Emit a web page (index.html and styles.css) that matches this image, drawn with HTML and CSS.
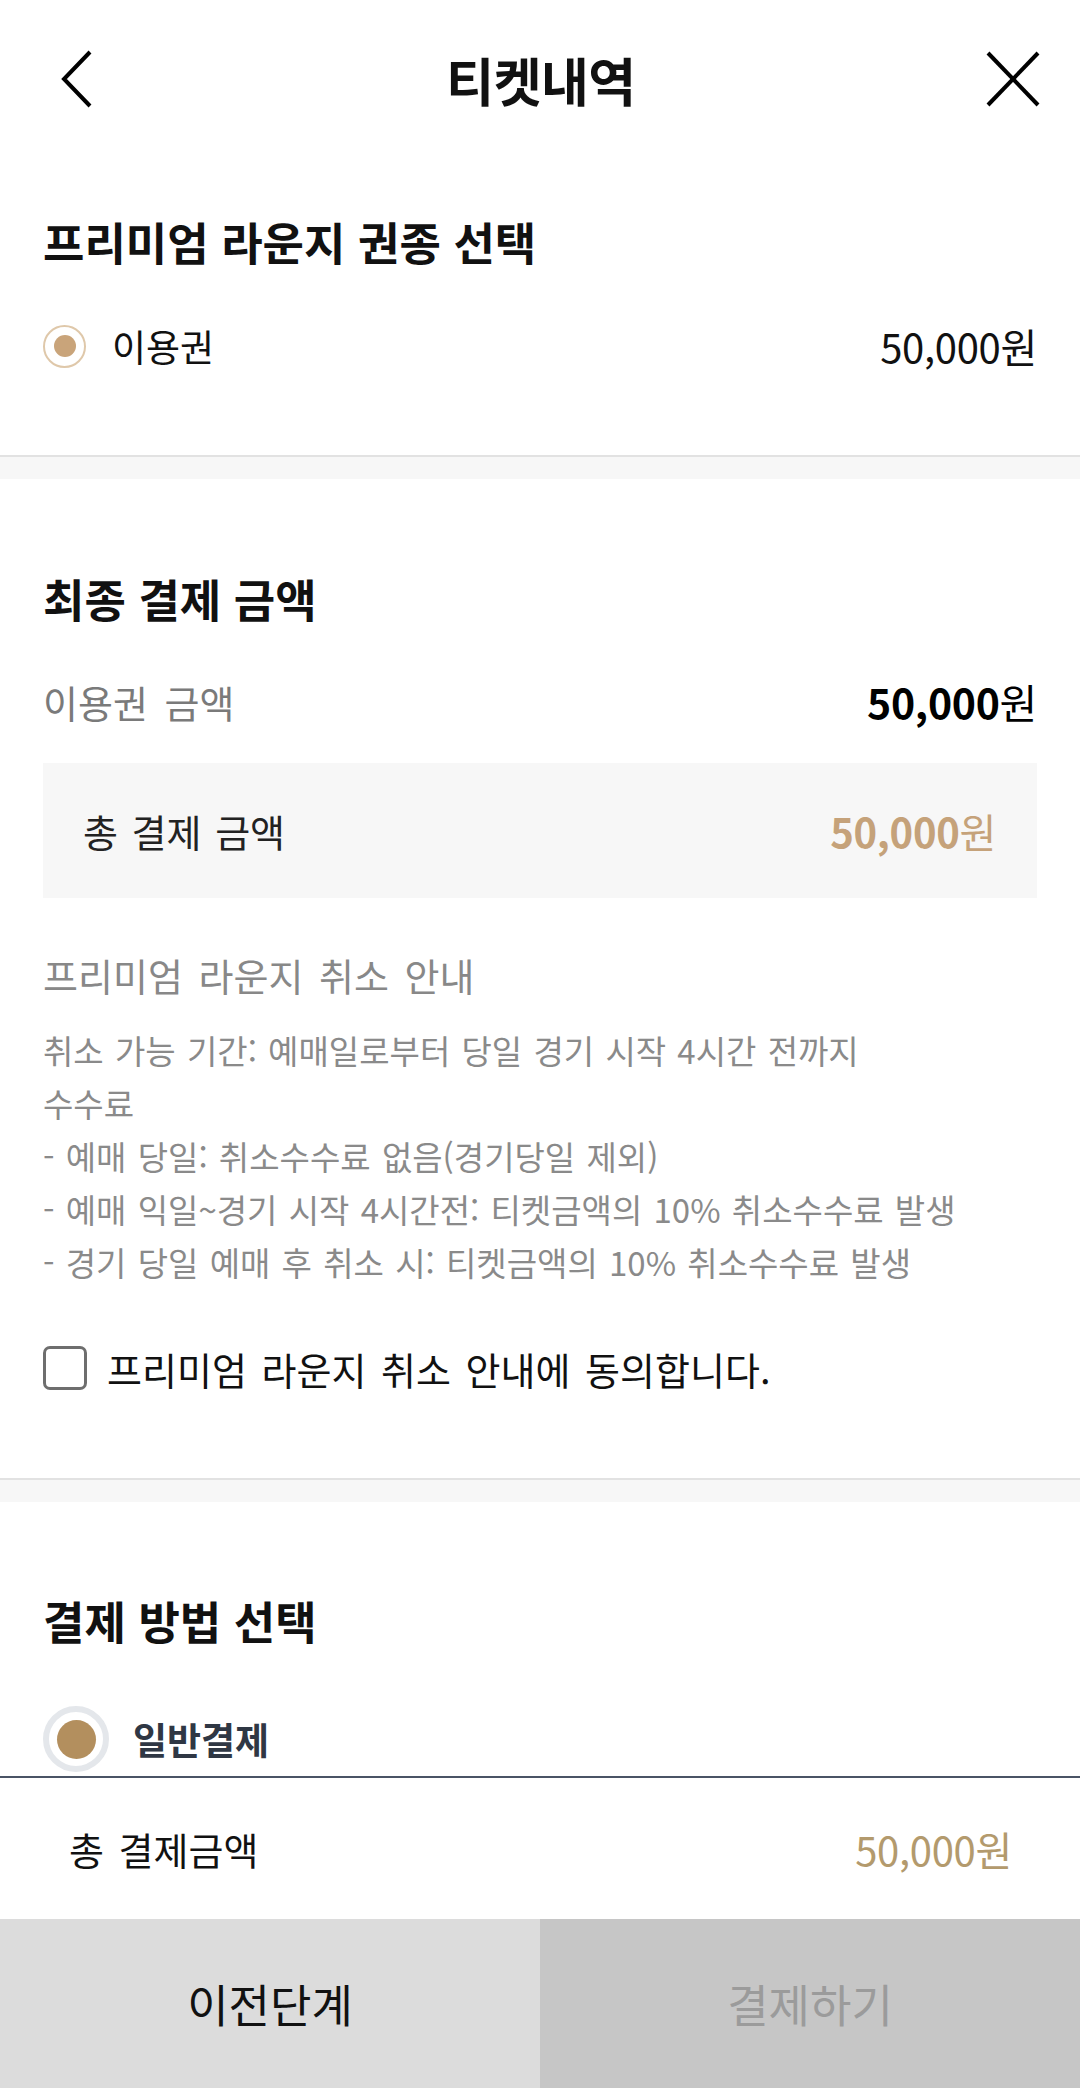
FILE: index.html
```html
<!DOCTYPE html>
<html lang="ko">
<head>
   <meta charset="UTF-8">
   <meta name="viewport" content="width=device-width, initial-scale=1.0">
   <title>티켓내역</title>
   <link rel="stylesheet" href="styles.css">
</head>
<body>
   <header class="top-bar">
      <button class="icon-btn" aria-label="뒤로">
         <svg width="44" height="60" viewBox="0 0 44 60">
            <polyline points="34,3 8,30 34,57" fill="none" stroke="#000" stroke-width="4" stroke-linejoin="miter"/>
         </svg>
      </button>
      <h1 class="page-title">티켓내역</h1>
      <button class="icon-btn" aria-label="닫기">
         <svg width="60" height="60" viewBox="0 0 60 60">
            <line x1="6" y1="4" x2="56" y2="56" stroke="#000" stroke-width="4"/>
            <line x1="56" y1="4" x2="6" y2="56" stroke="#000" stroke-width="4"/>
         </svg>
      </button>
   </header>

   <section class="block block-ticket">
      <h2 class="block-title">프리미엄 라운지 권종 선택</h2>
      <div class="row ticket-row">
         <label class="radio-label">
            <span class="radio radio-small"><span class="radio-dot"></span></span>
            <span>이용권</span>
         </label>
         <span class="price">50,000원</span>
      </div>
   </section>

   <div class="divider"></div>

   <section class="block block-amount">
      <h2 class="block-title">최종 결제 금액</h2>
      <div class="row amount-row">
         <span class="muted">이용권 금액</span>
         <span class="price price-bold"><b>50,000</b>원</span>
      </div>
      <div class="row total-box">
         <span>총 결제 금액</span>
         <span class="price price-tan"><b>50,000</b>원</span>
      </div>

      <p class="notice-title">프리미엄 라운지 취소 안내</p>
      <ul class="notice-list">
         <li>취소 가능 기간: 예매일로부터 당일 경기 시작 4시간 전까지</li>
         <li>수수료</li>
         <li>- 예매 당일: 취소수수료 없음(경기당일 제외)</li>
         <li>- 예매 익일~경기 시작 4시간전: 티켓금액의 10% 취소수수료 발생</li>
         <li>- 경기 당일 예매 후 취소 시: 티켓금액의 10% 취소수수료 발생</li>
      </ul>

      <label class="agree">
         <span class="checkbox"></span>
         <span>프리미엄 라운지 취소 안내에 동의합니다.</span>
      </label>
   </section>

   <div class="divider"></div>

   <section class="block block-method">
      <h2 class="block-title">결제 방법 선택</h2>
      <label class="radio-label method">
         <span class="radio radio-large"><span class="radio-dot"></span></span>
         <span>일반결제</span>
      </label>
   </section>

   <footer class="bottom-bar">
      <div class="row bottom-total">
         <span>총 결제금액</span>
         <span class="bottom-price">50,000원</span>
      </div>
      <div class="actions">
         <button class="btn btn-prev">이전단계</button>
         <button class="btn btn-pay" disabled>결제하기</button>
      </div>
   </footer>
</body>
</html>
```

FILE: styles.css
```css
* {
   box-sizing: border-box;
}

body {
   margin: 0;
   font-family: "Noto Sans CJK KR", "Noto Sans", sans-serif;
   color: #111111;
   background: #ffffff;
}

button {
   font-family: inherit;
}

.top-bar {
   height: 158px;
   display: flex;
   align-items: center;
   justify-content: space-between;
   padding: 0 38px 0 56px;
}

.icon-btn {
   background: none;
   border: none;
   padding: 0;
   display: flex;
}

.page-title {
   margin: 0;
   font-size: 52px;
   font-weight: 700;
   letter-spacing: -0.5px;
}

.block {
   padding: 0 43px;
}

.block-title {
   margin: 0;
   font-size: 45px;
   line-height: 60px;
   font-weight: 700;
}

.block-ticket {
   padding-top: 54px;
   padding-bottom: 79px;
}

.block-amount {
   padding-top: 90px;
   padding-bottom: 85px;
}

.block-method {
   padding-top: 89px;
   padding-bottom: 320px;
}

.row {
   display: flex;
   align-items: center;
   justify-content: space-between;
}

.ticket-row {
   margin-top: 44px;
   height: 60px;
   font-size: 37px;
}

.radio-label {
   display: flex;
   align-items: center;
   gap: 26px;
}

.radio {
   border-radius: 50%;
   display: flex;
   align-items: center;
   justify-content: center;
   flex-shrink: 0;
}

.radio-small {
   width: 43px;
   height: 43px;
   border: 2px solid #dfc8aa;
}

.radio-small .radio-dot {
   width: 22px;
   height: 22px;
   border-radius: 50%;
   background: #c9a47a;
}

.radio-large {
   width: 66px;
   height: 66px;
   border: 6px solid #e4e7eb;
}

.radio-large .radio-dot {
   width: 39px;
   height: 39px;
   border-radius: 50%;
   background: #b38f5e;
}

.price {
   font-size: 40px;
   letter-spacing: -0.3px;
}

.price b {
   font-weight: 700;
}

.price-bold {
   font-size: 41px;
   color: #000000;
}

.price-tan {
   color: #c5a27a;
}

.amount-row {
   margin-top: 42px;
   height: 60px;
   font-size: 38px;
   word-spacing: 6px;
}

.muted {
   color: #7a7a7a;
}

.total-box {
   margin-top: 32px;
   height: 135px;
   padding: 0 41px 0 40px;
   background: #f7f7f7;
   font-size: 38px;
   word-spacing: 3px;
   color: #222222;
}

.notice-title {
   margin: 52px 0 0;
   font-size: 38px;
   line-height: 50px;
   word-spacing: 5px;
   color: #888888;
}

.notice-list {
   list-style: none;
   margin: 24px 0 0;
   padding: 0;
   font-size: 33px;
   line-height: 53px;
   word-spacing: 2px;
   color: #8a8a8a;
}

.agree {
   margin-top: 54px;
   height: 50px;
   display: flex;
   align-items: center;
   gap: 20px;
   font-size: 38px;
   word-spacing: 4px;
   color: #111111;
}

.checkbox {
   width: 44px;
   height: 44px;
   border: 3px solid #6e6e6e;
   border-radius: 7px;
   flex-shrink: 0;
}

.divider {
   height: 24px;
   background: #f7f7f7;
   border-top: 2px solid #e2e2e2;
}

.method {
   margin-top: 55px;
   gap: 24px;
   font-size: 37px;
   font-weight: 700;
   color: #2f3744;
}

.bottom-bar {
   position: fixed;
   left: 0;
   right: 0;
   bottom: 0;
   background: #ffffff;
   border-top: 2px solid #4a5465;
}

.bottom-total {
   height: 141px;
   padding: 0 68px 0 69px;
   font-size: 38px;
   word-spacing: 4px;
   color: #111111;
}

.bottom-price {
   font-size: 40px;
   color: #b39a6d;
   letter-spacing: -0.3px;
}

.actions {
   display: grid;
   grid-template-columns: 540px 540px;
}

.btn {
   height: 169px;
   border: none;
   font-size: 45px;
   padding: 0;
}

.btn-prev {
   background: #dcdcdc;
   color: #111111;
}

.btn-pay {
   background: #c6c6c6;
   color: #9b9b9b;
}
```
